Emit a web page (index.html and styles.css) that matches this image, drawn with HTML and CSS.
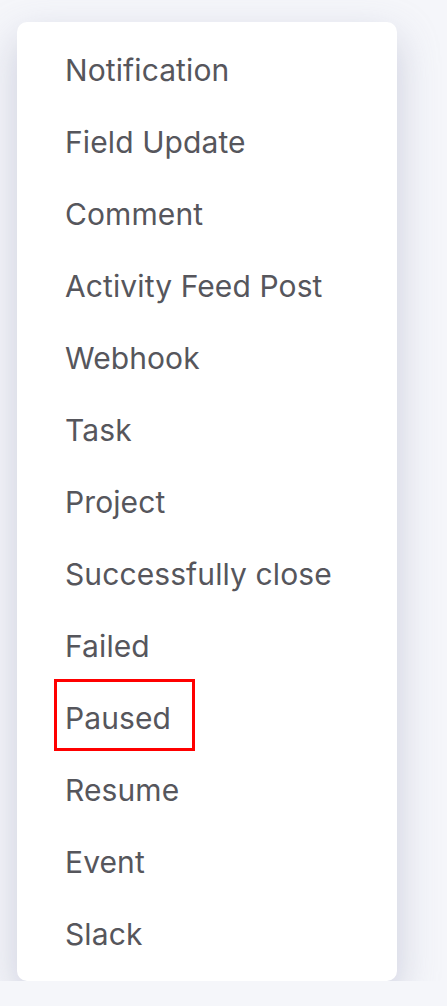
FILE: index.html
```html
<!DOCTYPE html>
<html lang="en">
<head>
    <meta charset="UTF-8">
    <meta name="viewport" content="width=device-width, initial-scale=1.0">
    <title>Actions</title>
    <link rel="stylesheet" href="styles.css">
</head>
<body>
    <div class="menu">
        <ul class="menuItens">
            <li class="menuItem">Notification</li>
            <li class="menuItem">Field Update</li>
            <li class="menuItem">Comment</li>
            <li class="menuItem">Activity Feed Post</li>
            <li class="menuItem">Webhook</li>
            <li class="menuItem">Task</li>
            <li class="menuItem">Project</li>
            <li class="menuItem">Successfully close</li>
            <li class="menuItem">Failed</li>
            <li class="menuItem destaque">Paused</li>
            <li class="menuItem">Resume</li>
            <li class="menuItem">Event</li>
            <li class="menuItem">Slack</li>
        </ul>
    </div>
</body>
</html>
```

FILE: styles.css
```css
body {
    margin: 0;
    background: #f5f6fa;
    font-family: Inter, "Noto Sans", sans-serif;
    color: #56565c;
}

.menu {
    width: 380px;
    height: 959px;
    box-sizing: border-box;
    margin: 22px 0 0 17px;
    padding-top: 12px;
    background-color: #ffffff;
    border-radius: 10px;
    box-shadow: 0 16px 40px rgba(150, 156, 185, 0.45);
}

.menuItens {
    list-style: none;
    margin: 0;
    padding: 0 0 0 48px;
}

.menuItem {
    font-size: 30px;
    letter-spacing: 0.1px;
    line-height: 72px;
    height: 72px;
}

/* caixa vermelha em volta do item */
.destaque {
    position: relative;
}

.destaque::after {
    content: "";
    position: absolute;
    left: -11px;
    top: -3px;
    width: 141px;
    height: 72px;
    box-sizing: border-box;
    border: 3px solid #ff0000;
}
```
